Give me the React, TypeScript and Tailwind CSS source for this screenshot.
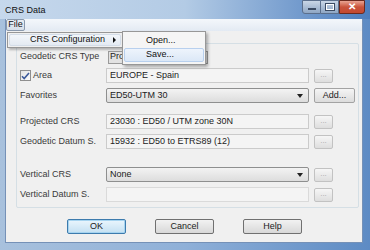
import React from 'react';

const font = { fontFamily: '"Liberation Sans", Arial, sans-serif' };

function DotsButton({ faded = false }: { faded?: boolean }) {
  return (
    <div
      className={`ml-[5px] w-[19px] h-[14px] rounded-[2px] border bg-gradient-to-b from-[#f6f6f6] to-[#dedede] flex items-center justify-center text-[8px] leading-none ${
        faded ? 'border-[#c2c2c2] text-[#a8a8a8]' : 'border-[#a9a9a9] text-[#6b6b6b]'
      }`}
    >
      <span className="-mt-[2px]">...</span>
    </div>
  );
}

function Field({ children, className = '' }: { children?: React.ReactNode; className?: string }) {
  return (
    <div className={`w-[203px] h-[15px] border border-[#cbcbcb] bg-[#f4f4f4] flex items-center pl-[3px] text-[9px] text-[#222] ${className}`}>
      {children}
    </div>
  );
}

function Combo({ children }: { children?: React.ReactNode }) {
  return (
    <div className="w-[203px] h-[15px] border border-[#8e8f8f] rounded-[2px] bg-gradient-to-b from-[#f3f3f3] to-[#dddddd] flex items-center pl-[3px] pr-[5px] text-[9px] text-[#222]">
      <span className="flex-1">{children}</span>
      <svg width="6" height="4" viewBox="0 0 6 4">
        <path d="M0 0h6L3 4z" fill="#222" />
      </svg>
    </div>
  );
}

function Row({ label, children, className = '' }: { label: React.ReactNode; children: React.ReactNode; className?: string }) {
  return (
    <div className={`flex items-center ${className}`}>
      <div className="w-[86px] text-[9px] text-[#3a3a3a] flex items-center">{label}</div>
      {children}
    </div>
  );
}

function DialogButton({ children, focused = false }: { children: React.ReactNode; focused?: boolean }) {
  return (
    <div
      className={`w-[59px] h-[15px] rounded-[2px] border flex items-center justify-center text-[9px] text-[#222] ${
        focused
          ? 'border-[#3d7bad] bg-gradient-to-b from-[#eaf6fd] to-[#c4e0f2] shadow-[inset_0_0_0_1px_#a6d4f0]'
          : 'border-[#707070] bg-gradient-to-b from-[#f2f2f2] to-[#d8d8d8]'
      }`}
    >
      {children}
    </div>
  );
}

export default function App() {
  return (
    <div className="relative w-[370px] h-[250px] overflow-hidden flex flex-col bg-gradient-to-r from-[#a8c1dd] via-[#8fb0d8] to-[#5d8bc4]" style={font}>
      {/* title bar */}
      <div className="h-[19px] flex items-start bg-gradient-to-r from-[#c6d8ec] via-[#b3cbe5] to-[#4c7dbd]">
        <span className="ml-[5px] mt-[4px] text-[9px] text-[#111]">CRS Data</span>
        <div className="ml-auto mr-[5px] flex">
          <div className="w-[19px] h-[14px] border border-[#5b6f8c] rounded-bl-[3px] bg-gradient-to-b from-[#c9d6e6] to-[#8ea6c4] flex items-end justify-center pb-[3px]">
            <div className="w-[8px] h-[2px] bg-white border border-[#3b4b63]" />
          </div>
          <div className="w-[18px] h-[14px] border-y border-r border-[#5b6f8c] bg-gradient-to-b from-[#c9d6e6] to-[#8ea6c4] flex items-center justify-center">
            <div className="w-[8px] h-[6px] border-[1.5px] border-white outline outline-1 outline-[#3b4b63]" />
          </div>
          <div className="w-[26px] h-[14px] border border-[#6b2a1f] rounded-br-[3px] bg-gradient-to-b from-[#e8a493] via-[#c9533c] to-[#c44a30] flex items-center justify-center">
            <span className="text-white text-[10px] font-bold leading-none">✕</span>
          </div>
        </div>
      </div>

      {/* client area */}
      <div className="flex-1 ml-[5px] mr-[7px] mb-[7px] bg-[#f0f0f0] border-l border-r border-b border-[#7591b7] flex flex-col">
        <div className="h-[12px] bg-gradient-to-b from-[#f4f7fb] to-[#e3eaf3] flex items-center">
          <div className="h-[12px] w-[19px] border border-[#8a99ad] rounded-[2px] bg-gradient-to-b from-[#e8edf3] to-[#d7dfe9] flex items-center justify-center text-[9px] text-[#111]">
            File
          </div>
        </div>

        <div className="ml-[10px] mr-[3px] mt-[12px] h-[165px] border border-[#d5dfe5] rounded-[2px] pl-[3px] flex flex-col">
          <Row label="Geodetic CRS Type" className="mt-[6px] h-[14px]">
            <div className="ml-[2px] w-[100px] h-[13px] border border-[#9a9a9a] bg-[#e2e2e2] pl-[1px] text-[9px] text-[#222] flex items-center">Pro</div>
          </Row>
          <Row
            className="mt-[4px] h-[15px]"
            label={
              <>
                <div className="w-[11px] h-[11px] border border-[#8f8f8f] bg-gradient-to-br from-[#e4e4e4] to-[#fbfbfb] flex items-center justify-center mr-[2px]">
                  <svg width="9" height="8" viewBox="0 0 9 8">
                    <path d="M1 4.2l2.2 2.3L8 1" stroke="#3c5a9a" strokeWidth="1.6" fill="none" />
                  </svg>
                </div>
                Area
              </>
            }
          >
            <Field>EUROPE - Spain</Field>
            <DotsButton faded />
          </Row>
          <Row label="Favorites" className="mt-[5px] h-[15px]">
            <Combo>ED50-UTM 30</Combo>
            <div className="ml-[5px] w-[41px] h-[15px] rounded-[2px] border border-[#a3a3a3] bg-gradient-to-b from-[#f5f5f5] to-[#dcdcdc] flex items-center justify-center text-[9px] text-[#222]">
              Add...
            </div>
          </Row>
          <Row label="Projected CRS" className="mt-[11px] h-[15px]">
            <Field>23030 : ED50 / UTM zone 30N</Field>
            <DotsButton faded />
          </Row>
          <Row label="Geodetic Datum S." className="mt-[5px] h-[15px]">
            <Field>15932 : ED50 to ETRS89 (12)</Field>
            <DotsButton faded />
          </Row>
          <Row label="Vertical CRS" className="mt-[18px] h-[15px]">
            <Combo>None</Combo>
            <DotsButton faded />
          </Row>
          <Row label="Vertical Datum S." className="mt-[5px] h-[15px]">
            <Field className="border-[#dadada] bg-[#f2f2f2]" />
            <DotsButton faded />
          </Row>
        </div>

        <div className="mt-[11px] pl-[61px] flex gap-[29px]">
          <DialogButton focused>OK</DialogButton>
          <DialogButton>Cancel</DialogButton>
          <DialogButton>Help</DialogButton>
        </div>
      </div>

      {/* open menus */}
      <div className="absolute left-[7px] top-[32px] w-[116px] h-[16px] border border-[#979797] bg-[#f0f0f0] shadow-[2px_2px_2px_rgba(0,0,0,0.25)] p-[1px]">
        <div className="h-full rounded-[2px] border border-[#d4dde8] bg-gradient-to-b from-[#f3f6fa] to-[#e4eaf2] flex items-center pl-[20px] pr-[4px] text-[9px] text-[#111]">
          <span className="flex-1">CRS Configuration</span>
          <svg width="3" height="6" viewBox="0 0 3 6">
            <path d="M0 0l3 3-3 3z" fill="#111" />
          </svg>
        </div>
      </div>
      <div className="absolute left-[122px] top-[31px] w-[84px] h-[34px] border border-[#979797] bg-[#f5f5f5] shadow-[2px_2px_3px_rgba(0,0,0,0.3)] p-[1px] flex flex-col">
        <div className="h-[15px] flex items-center pl-[22px] text-[9px] text-[#111]">Open...</div>
        <div className="h-[14px] rounded-[2px] border border-[#b8d0ee] bg-gradient-to-b from-[#eef4fc] to-[#dce8f7] flex items-center pl-[21px] text-[9px] text-[#111]">
          Save...
        </div>
      </div>
    </div>
  );
}
